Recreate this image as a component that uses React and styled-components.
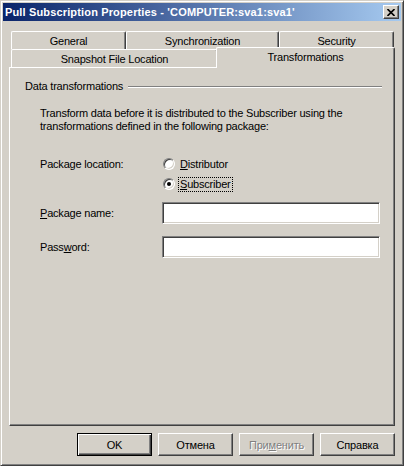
import React from 'react';
import styled, { createGlobalStyle } from 'styled-components';

const GlobalStyle = createGlobalStyle`
  html, body {
    margin: 0;
    padding: 0;
    background: #d4d0c8;
  }
`;

const Window = styled.div`
  width: 404px;
  height: 466px;
  box-sizing: border-box;
  background: #d4d0c8;
  border: 1px solid;
  border-color: #d4d0c8 #404040 #404040 #d4d0c8;
  box-shadow: inset 1px 1px #ffffff, inset -1px -1px #808080;
  padding: 2px;
  display: flex;
  flex-direction: column;
  font-family: 'Liberation Sans', Arial, sans-serif;
  font-size: 11px;
  letter-spacing: -0.2px;
  color: #000;
`;

const TitleBar = styled.div`
  height: 18px;
  display: flex;
  align-items: center;
  justify-content: space-between;
  padding: 0 2px 0 2px;
  background: linear-gradient(to right, #0a246a, #a6caf0);
`;

const Title = styled.span`
  color: #fff;
  font-weight: bold;
  font-size: 11px;
  letter-spacing: 0.15px;
`;

const CloseButton = styled.div`
  width: 16px;
  height: 14px;
  box-sizing: border-box;
  background: #d4d0c8;
  border: 1px solid;
  border-color: #ffffff #404040 #404040 #ffffff;
  box-shadow: inset -1px -1px #808080;
  display: flex;
  align-items: center;
  justify-content: center;
`;

const Body = styled.div`
  flex: 1;
  display: flex;
  flex-direction: column;
  padding: 10px 6px 0 6px;
`;

const Tabs = styled.div`
  display: flex;
  flex-direction: column;
  padding-left: 2px;
`;

const TabRow = styled.div`
  display: flex;
  height: 18px;
`;

const Tab = styled.div`
  width: ${(p) => p.$w}px;
  box-sizing: border-box;
  height: ${(p) => (p.$active ? 21 : 18)}px;
  margin: ${(p) => (p.$active ? '-2px -2px -1px -2px' : '0')};
  position: ${(p) => (p.$active ? 'relative' : 'static')};
  z-index: ${(p) => (p.$active ? 1 : 0)};
  background: #d4d0c8;
  border-top: 1px solid #ffffff;
  border-left: 1px solid #ffffff;
  border-right: 1px solid #404040;
  box-shadow: inset -1px 0 #808080;
  border-top-left-radius: 2px;
  border-top-right-radius: 2px;
  display: flex;
  align-items: center;
  justify-content: center;
  padding-bottom: ${(p) => (p.$active ? 3 : 0)}px;
`;

const Panel = styled.div`
  height: 359px;
  box-sizing: border-box;
  border: 1px solid;
  border-color: #ffffff #404040 #404040 #ffffff;
  box-shadow: inset -1px -1px #808080;
  padding: 12px 12px 0 15px;
`;

const GroupHeader = styled.div`
  display: flex;
  align-items: center;
  gap: 5px;
  line-height: 13px;
`;

const Etched = styled.div`
  flex: 1;
  height: 0;
  border-top: 1px solid #808080;
  border-bottom: 1px solid #ffffff;
`;

const Paragraph = styled.p`
  margin: 14px 0 0 15px;
  line-height: 13px;
`;

const FormRow = styled.div`
  display: grid;
  grid-template-columns: 122px 218px;
  align-items: ${(p) => p.$align || 'center'};
  margin: ${(p) => p.$top}px 0 0 15px;
`;

const Label = styled.span`
  line-height: ${(p) => p.$lh || 13}px;
`;

const RadioGroup = styled.div`
  display: flex;
  flex-direction: column;
`;

const Option = styled.div`
  height: 20px;
  display: flex;
  align-items: center;
  gap: 5px;
  padding-left: 1px;
`;

const Radio = styled.span`
  width: 12px;
  height: 12px;
  box-sizing: border-box;
  border-radius: 50%;
  border: 1px solid;
  border-color: #808080 #ffffff #ffffff #808080;
  box-shadow: inset 1px 1px #404040, inset -1px -1px #d4d0c8;
  background: #fff;
  display: flex;
  align-items: center;
  justify-content: center;

  &::after {
    content: '';
    width: 4px;
    height: 4px;
    border-radius: 50%;
    background: ${(p) => (p.$checked ? '#000' : 'transparent')};
  }
`;

const Focus = styled.span`
  border: 1px dotted #000;
  padding: 0 1px;
  margin-left: -2px;
  line-height: 13px;
`;

const Key = styled.u`
  text-decoration: underline;
`;

const Field = styled.input`
  width: 218px;
  height: 22px;
  box-sizing: border-box;
  margin: 0;
  background: #ffffff;
  border: 1px solid;
  border-color: #808080 #ffffff #ffffff #808080;
  box-shadow: inset 1px 1px #404040, inset -1px -1px #d4d0c8;
  outline: none;
  font: inherit;
`;

const Buttons = styled.div`
  display: flex;
  justify-content: flex-end;
  gap: 6px;
  margin-top: 7px;
`;

const Button = styled.div`
  width: 75px;
  height: 23px;
  box-sizing: border-box;
  background: #d4d0c8;
  border: 1px solid;
  border-color: ${(p) =>
    p.$default ? '#000 #000 #000 #000' : '#ffffff #404040 #404040 #ffffff'};
  box-shadow: ${(p) =>
    p.$default
      ? 'inset 1px 1px #ffffff, inset -1px -1px #404040, inset -2px -2px #808080'
      : 'inset -1px -1px #808080'};
  display: flex;
  align-items: center;
  justify-content: center;
  color: ${(p) => (p.$disabled ? '#808080' : '#000')};
  text-shadow: ${(p) => (p.$disabled ? '1px 1px #ffffff' : 'none')};
`;

const CloseIcon = () => (
  <svg width="8" height="7" viewBox="0 0 8 7">
    <path d="M0.5 0 L7.5 7 M7.5 0 L0.5 7" stroke="#000" strokeWidth="1.6" />
  </svg>
);

const App = () => {
  return (
    <>
      <GlobalStyle />
      <Window>
        <TitleBar>
          <Title>Pull Subscription Properties - 'COMPUTER:sva1:sva1'</Title>
          <CloseButton>
            <CloseIcon />
          </CloseButton>
        </TitleBar>
        <Body>
          <Tabs>
            <TabRow>
              <Tab $w={115}>General</Tab>
              <Tab $w={153}>Synchronization</Tab>
              <Tab $w={115}>Security</Tab>
            </TabRow>
            <TabRow>
              <Tab $w={207}>Snapshot File Location</Tab>
              <Tab $w={179} $active>
                Transformations
              </Tab>
            </TabRow>
          </Tabs>
          <Panel>
            <GroupHeader>
              <span>Data transformations</span>
              <Etched />
            </GroupHeader>
            <Paragraph>
              Transform data before it is distributed to the Subscriber using the
              <br />
              transformations defined in the following package:
            </Paragraph>
            <FormRow $top={21} $align="start">
              <Label $lh={20}>Package location:</Label>
              <RadioGroup>
                <Option>
                  <Radio />
                  <span>
                    <Key>D</Key>istributor
                  </span>
                </Option>
                <Option>
                  <Radio $checked />
                  <Focus>
                    <Key>S</Key>ubscriber
                  </Focus>
                </Option>
              </RadioGroup>
            </FormRow>
            <FormRow $top={8}>
              <Label>
                <Key>P</Key>ackage name:
              </Label>
              <Field readOnly />
            </FormRow>
            <FormRow $top={12}>
              <Label>
                Pass<Key>w</Key>ord:
              </Label>
              <Field readOnly />
            </FormRow>
          </Panel>
          <Buttons>
            <Button $default>OK</Button>
            <Button>Отмена</Button>
            <Button $disabled>
              При<Key>м</Key>енить
            </Button>
            <Button>Справка</Button>
          </Buttons>
        </Body>
      </Window>
    </>
  );
};

export default App;
